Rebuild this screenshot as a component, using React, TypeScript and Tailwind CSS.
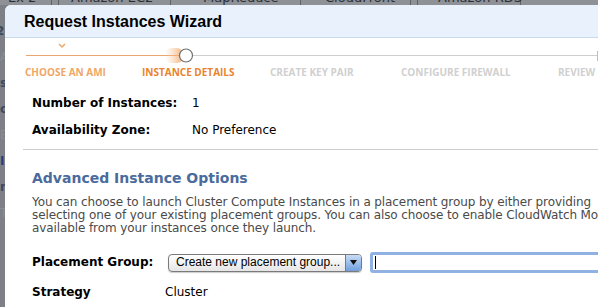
import React from "react";

const verdana = { fontFamily: '"DejaVu Sans", Verdana, sans-serif' };
const myriad = { fontFamily: '"Open Sans", "Liberation Sans", sans-serif' };
const arial = { fontFamily: '"Liberation Sans", Arial, sans-serif' };

export default function App() {
  return (
    <div className="relative w-[598px] h-[307px] overflow-hidden bg-[#7d8187]" style={verdana}>
      {/* background page tabs */}
      <div className="flex h-[14px] -mt-[9px] bg-[#8e9196] text-[13px] leading-[14px] text-[#2a2f36] whitespace-nowrap">
        <div className="w-[52px] border-r border-[#5f6368] pl-2">Ex 2</div>
        <div className="w-[113px] border-r border-[#5f6368] pl-3 border-l border-l-[#5f6368] ml-[6px]">Amazon EC2</div>
        <div className="w-[130px] border-r border-[#5f6368] pl-8">MapReduce</div>
        <div className="w-[110px] border-r border-[#5f6368] pl-6">CloudFront</div>
        <div className="w-[104px] border-r border-[#5f6368] pl-5 ml-[6px] border-l border-l-[#5f6368]">Amazon RDS</div>
      </div>
      <div className="flex flex-col gap-[14px] pt-[20px] text-[12px] text-[#3b4a60] font-bold leading-none">
        <span className="-ml-1">2</span>
        <span className="text-[#8a8d92] font-normal">A</span>
        <span>st</span>
        <span>o</span>
        <span className="text-[#8a8d92] font-normal">E</span>
        <span className="text-[#2a3f7a]">I</span>
        <span>n</span>
        <span className="text-[#8a8d92] font-normal">T</span>
      </div>

      {/* modal window */}
      <div className="absolute left-[5px] top-[5px] w-[610px] h-[320px] bg-white rounded-tl-[6px] overflow-hidden">
        <div className="h-[33px] bg-[#e9f1fc] border-b border-[#c8d9ee] pl-[19px] pt-[8px]">
          <h1 className="text-[16px] leading-[18px] font-bold text-black" style={arial}>Request Instances Wizard</h1>
        </div>

        {/* progress */}
        <div className="relative h-[42px]">
          <svg className="absolute left-0 top-0" width="610" height="30" viewBox="0 0 610 30">
            <defs>
              <linearGradient id="glow" x1="0" x2="1" y1="0" y2="0">
                <stop offset="0" stopColor="#f6c9a0" stopOpacity="0" />
                <stop offset="1" stopColor="#f2a86a" stopOpacity="0.9" />
              </linearGradient>
            </defs>
            <path d="M54 6 L57 9 L60 6" fill="none" stroke="#eaa86b" strokeWidth="1.5" />
            <line x1="21" y1="17.5" x2="176" y2="17.5" stroke="#eba670" strokeWidth="1" />
            <rect x="160" y="10" width="18" height="15" rx="6" fill="url(#glow)" />
            <line x1="188" y1="17.5" x2="592" y2="17.5" stroke="#cfcfcf" strokeWidth="1" />
            <line x1="592.5" y1="13" x2="592.5" y2="23" stroke="#bdbdbd" strokeWidth="1" />
            <circle cx="181" cy="17.5" r="6.5" fill="#fff" stroke="#6f6f6f" strokeWidth="1.2" />
          </svg>
          <div className="absolute left-0 top-[27px] w-full flex text-[10px] font-bold whitespace-nowrap" style={myriad}>
            <span className="absolute left-[20px] text-[#efa768]">CHOOSE AN AMI</span>
            <span className="absolute left-[137px] text-[#e9842c]">INSTANCE DETAILS</span>
            <span className="absolute left-[265px] text-[#d0d0d0]">CREATE KEY PAIR</span>
            <span className="absolute left-[396px] text-[#d0d0d0]">CONFIGURE FIREWALL</span>
            <span className="absolute left-[553px] text-[#d0d0d0]">REVIEW</span>
          </div>
        </div>

        {/* details */}
        <div className="pl-[27px] pt-[17px] pb-[12px] flex flex-col gap-[14px] text-[12px] text-black leading-[13px]">
          <div className="flex">
            <span className="w-[160px] font-bold">Number of Instances:</span>
            <span>1</span>
          </div>
          <div className="flex">
            <span className="w-[160px] font-bold">Availability Zone:</span>
            <span>No Preference</span>
          </div>
        </div>
        <div className="ml-[18px] border-t border-[#cccccc]" />

        <div className="pl-[27px] pt-[20px]">
          <h2 className="text-[14px] font-bold text-[#4a6b9c] leading-[17px]">Advanced Instance Options</h2>
          <p className="mt-[9px] text-[12px] leading-[13px] tracking-[-0.1px] text-[#4a4a4a] whitespace-nowrap">
            You can choose to launch Cluster Compute Instances in a placement group by either providing
            <br />
            selecting one of your existing placement groups. You can also choose to enable CloudWatch Monitoring
            <br />
            available from your instances once they launch.
          </p>

          <div className="flex items-center mt-[17px] text-[12px] leading-[13px] text-black">
            <span className="w-[136px] font-bold">Placement Group:</span>
            <div className="flex items-stretch h-[18px] w-[194px] rounded-[4px] border border-[#7a7a7a] bg-gradient-to-b from-white to-[#e6e6e6] shadow-[0_1px_1px_rgba(0,0,0,0.2)] overflow-hidden">
              <span className="flex-1 pl-[7px] flex items-center text-[12px] whitespace-nowrap" style={arial}>Create new placement group...</span>
              <span className="w-[16px] flex items-center justify-center bg-gradient-to-b from-[#c9dcf5] to-[#6f9fdc] border-l border-[#7a7a7a]">
                <svg width="7" height="5" viewBox="0 0 7 5"><path d="M0 0 H7 L3.5 5 Z" fill="#111" /></svg>
              </span>
            </div>
            <div className="ml-[8px] flex-1 h-[21px] border-[3px] border-[#8fb2e2] rounded-[3px] flex items-center pl-[2px]">
              <span className="w-px h-[13px] bg-black" />
            </div>
          </div>

          <div className="flex mt-[13px] text-[12px] leading-[13px] text-black">
            <span className="w-[133px] font-bold">Strategy</span>
            <span>Cluster</span>
          </div>
        </div>
      </div>
    </div>
  );
}
